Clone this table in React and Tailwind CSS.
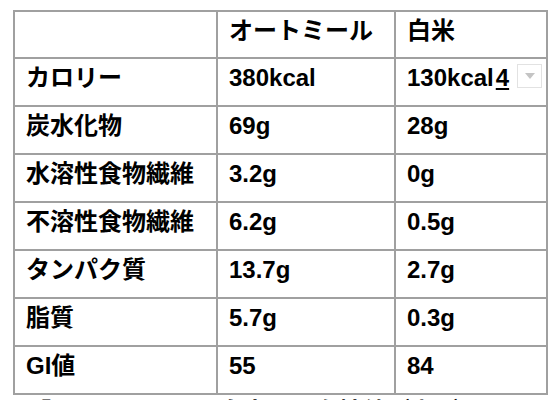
import React from 'react';

const ROWS = [
  ['カロリー', '380kcal', '130kcal'],
  ['炭水化物', '69g', '28g'],
  ['水溶性食物繊維', '3.2g', '0g'],
  ['不溶性食物繊維', '6.2g', '0.5g'],
  ['タンパク質', '13.7g', '2.7g'],
  ['脂質', '5.7g', '0.3g'],
  ['GI値', '55', '84'],
];

function Cell({ children, h }) {
  return (
    <div className={`relative border-r-2 border-b-2 border-[#a0a0a0] pl-[11px] pt-[5px] whitespace-nowrap ${h}`}>
      {children}
    </div>
  );
}

export default function App() {
  return (
    <div
      className="bg-white w-[552px] h-[400px] overflow-hidden pt-[10px] pl-[13px] text-black font-bold text-[24px] leading-[28px]"
      style={{ fontFamily: '"Liberation Sans", "Noto Sans CJK JP", sans-serif' }}
    >
      <div className="grid grid-cols-[203px_178px_152px] w-[535px] border-l-2 border-t-2 border-[#a0a0a0]">
        <Cell h="h-[47px]"></Cell>
        <Cell h="h-[47px]">オートミール</Cell>
        <Cell h="h-[47px]">白米</Cell>
        {ROWS.map((r, i) => (
          <React.Fragment key={i}>
            <Cell h="h-[48px]">{r[0]}</Cell>
            <Cell h="h-[48px]">{r[1]}</Cell>
            <Cell h="h-[48px]">
              {r[2]}
              {i === 0 && (
                <>
                  <span className="underline decoration-2 underline-offset-2 pl-[2px] pr-[6px]">4</span>
                  <span className="absolute left-[121px] top-[5px] w-[25px] h-[24px] border border-[#e2e2e2] bg-white flex items-center justify-center">
                    <span className="w-0 h-0 border-l-[5px] border-r-[5px] border-t-[6px] border-l-transparent border-r-transparent border-t-[#c4c4c4]" />
                  </span>
                </>
              )}
            </Cell>
          </React.Fragment>
        ))}
      </div>
      <p className="pl-[14px] mt-[3px] whitespace-nowrap">「オートミールは白米より血糖値が上がりにくい」</p>
    </div>
  );
}
